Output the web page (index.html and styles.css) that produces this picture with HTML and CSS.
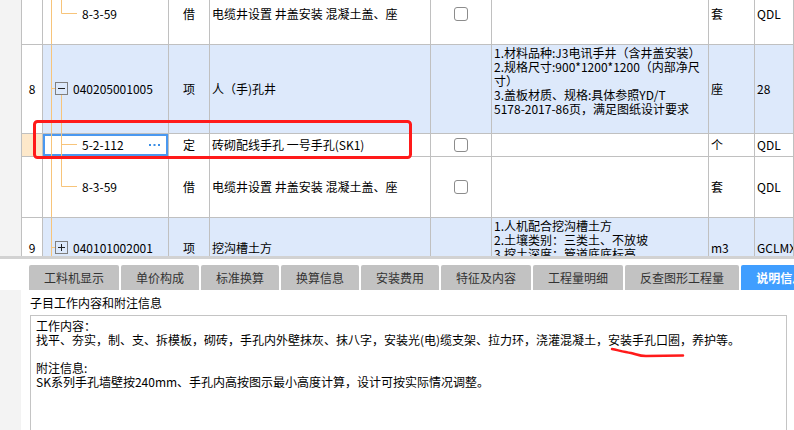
FILE: index.html
```html
<!DOCTYPE html>
<html lang="zh-CN">
<head>
  <meta charset="UTF-8" />
  <title>清单定额</title>
  <link rel="stylesheet" href="styles.css">
</head>
<body>
  <div class="top">
    <div class="gutter"></div>
    <div class="grid">
      <div class="rows">
        <div class="row h61">
          <div class="cell num"></div>
          <div class="cell code">
            <svg class="tree" width="39" height="60"><path d="M8.5 0V60M18.5 0V29.5H34"/></svg>
            <span>8-3-59</span>
          </div>
          <div class="cell type">借</div>
          <div class="cell name">电缆井设置 井盖安装 混凝土盖、座</div>
          <div class="cell check"><span class="box"></span></div>
          <div class="cell desc"></div>
          <div class="cell unit">套</div>
          <div class="cell src">QDL</div>
        </div>

        <div class="row h89 blue">
          <div class="cell num">8</div>
          <div class="cell code">
            <svg class="tree" width="30" height="88">
              <path d="M8.5 0V88M8.5 43.5H12.5M18.5 49.5V88"/>
              <rect class="toggle" x="12.5" y="37.5" width="12" height="12"/>
              <path class="sign" d="M15 43.5H22"/>
            </svg>
            <span>040205001005</span>
          </div>
          <div class="cell type">项</div>
          <div class="cell name">人（手)孔井</div>
          <div class="cell check"></div>
          <div class="cell desc">1.材料品种:J3电讯手井（含井盖安装）<br>2.规格尺寸:900*1200*1200（内部净尺<br>寸）<br>3.盖板材质、规格:具体参照YD/T<br>5178-2017-86页，满足图纸设计要求</div>
          <div class="cell unit">座</div>
          <div class="cell src">28</div>
        </div>

        <div class="row h23">
          <div class="cell num current"></div>
          <div class="cell code selected">
            <svg class="tree" width="39" height="22"><path d="M8.5 0V22M18.5 0V22M18.5 10.5H34"/></svg>
            <span>5-2-112</span>
            <svg class="more" width="12" height="3"><rect x="0" y="0" width="2" height="2"/><rect x="4.5" y="0" width="2" height="2"/><rect x="9" y="0" width="2" height="2"/></svg>
          </div>
          <div class="cell type">定</div>
          <div class="cell name">砖砌配线手孔 一号手孔(SK1)</div>
          <div class="cell check"><span class="box"></span></div>
          <div class="cell desc"></div>
          <div class="cell unit">个</div>
          <div class="cell src">QDL</div>
        </div>

        <div class="row h61">
          <div class="cell num"></div>
          <div class="cell code">
            <svg class="tree" width="39" height="60"><path d="M8.5 0V60M18.5 0V29.5H34"/></svg>
            <span>8-3-59</span>
          </div>
          <div class="cell type">借</div>
          <div class="cell name">电缆井设置 井盖安装 混凝土盖、座</div>
          <div class="cell check"><span class="box"></span></div>
          <div class="cell desc"></div>
          <div class="cell unit">套</div>
          <div class="cell src">QDL</div>
        </div>

        <div class="row h61 blue">
          <div class="cell num">9</div>
          <div class="cell code">
            <svg class="tree" width="30" height="60">
              <path d="M8.5 0V60M8.5 29.5H12.5"/>
              <rect class="toggle" x="12.5" y="23.5" width="12" height="12"/>
              <path class="sign" d="M15 29.5H22M18.5 26V33"/>
            </svg>
            <span>040101002001</span>
          </div>
          <div class="cell type">项</div>
          <div class="cell name">挖沟槽土方</div>
          <div class="cell check"></div>
          <div class="cell desc">1.人机配合挖沟槽土方<br>2.土壤类别：三类土、不放坡<br>3.挖土深度：管道底底标高</div>
          <div class="cell unit">m3</div>
          <div class="cell src">GCLMXHJ</div>
        </div>
      </div>
    </div>
  </div>

  <div class="splitter"></div>

  <div class="tabs">
    <div class="tab">工料机显示</div>
    <div class="tab">单价构成</div>
    <div class="tab">标准换算</div>
    <div class="tab">换算信息</div>
    <div class="tab">安装费用</div>
    <div class="tab">特征及内容</div>
    <div class="tab">工程量明细</div>
    <div class="tab">反查图形工程量</div>
    <div class="tab active">说明信息</div>
  </div>

  <div class="panel">
    <div class="gutter"></div>
    <div class="panel-body">
      <div class="panel-title">子目工作内容和附注信息</div>
      <div class="notes">工作内容：<br>找平、夯实，制、支、拆模板，砌砖，手孔内外壁抹灰、抹八字，安装光(电)缆支架、拉力环，浇灌混凝土，安装手孔口圈，养护等。<br><br>附注信息:<br>SK系列手孔墙壁按240mm、手孔内高按图示最小高度计算，设计可按实际情况调整。</div>
    </div>
  </div>

  <!-- hand-drawn markup on top of the screenshot -->
  <svg class="marks" width="794" height="430">
    <rect x="34.5" y="121.5" width="376" height="36" rx="3"/>
    <path d="M612 349C619 350.5 625 352 631 353C636 354 639 356 646 356L683 355.5"/>
  </svg>
</body>
</html>
```

FILE: styles.css
```css
body {
  margin: 0;
  width: 794px;
  height: 430px;
  overflow: hidden;
  position: relative;
  font-family: "Noto Sans CJK SC", "Liberation Sans", sans-serif;
  font-size: 12px;
  color: #000;
  background-color: #fff;
}

.top {
  display: flex;
  height: 256px;
}

.gutter {
  flex: none;
  width: 21px;
  background-color: #f3f3f3;
}

.grid {
  flex: 1;
  min-width: 0;
  border-left: 1px solid #c0c0c0;
  overflow: hidden;
}

.rows {
  margin-top: -16px;
}

.row {
  display: grid;
  grid-template-columns: 21px 126px 41px 221px 61px 217px 46px 1fr;
  box-sizing: border-box;
  border-bottom: 1px solid #c0c0c0;
  background-color: #fff;
}

.h61 { height: 61px; }
.h89 { height: 89px; }
.h23 { height: 23px; }

.row.blue .cell {
  background-color: #dde9fb;
}

.row.blue .cell.num {
  background-color: #fff;
}

.cell {
  display: flex;
  align-items: center;
  box-sizing: border-box;
  min-width: 0;
  overflow: hidden;
  white-space: nowrap;
  border-right: 1px solid #c0c0c0;
  line-height: 14px;
}

.cell.num {
  justify-content: center;
}

.cell.num.current {
  background-color: #fde8ca;
}

.cell.code.selected {
  box-shadow: inset 0 0 0 2px #4a98f0;
}

.tree {
  display: block;
  flex: none;
}

.tree path {
  fill: none;
  stroke: #f7c47a;
  stroke-width: 1;
}

.tree .toggle {
  fill: none;
  stroke: #808080;
  stroke-width: 1;
}

.tree .sign {
  stroke: #222;
}

.more {
  display: block;
  margin-left: auto;
  margin-right: 7px;
  fill: #3a8ee6;
}

.cell.type {
  justify-content: center;
}

.cell.name {
  padding-left: 2px;
}

.cell.check {
  justify-content: center;
}

.box {
  width: 12px;
  height: 12px;
  border: 1px solid #8c8c8c;
  border-radius: 3px;
  background-color: #fff;
}

.cell.desc {
  display: block;
  padding: 1px 0 0 2px;
}

.cell.unit,
.cell.src {
  padding-left: 2px;
}

.splitter {
  height: 3px;
  background-color: #d2d2d2;
}

.tabs {
  display: flex;
  gap: 2px;
  padding: 6px 0 0 29px;
}

.tab {
  flex: none;
  height: 25px;
  line-height: 25px;
  padding: 0 15px;
  background-color: #c2c2c2;
  color: #333;
  border-radius: 2px 2px 0 0;
}

.tab.active {
  background-color: #409eff;
  color: #fff;
  font-weight: bold;
}

.panel {
  display: flex;
  height: 140px;
}

.panel-body {
  flex: 1;
  padding: 6px 7px 0 9px;
}

.panel-title {
  line-height: 14px;
  margin-bottom: 5px;
}

.notes {
  height: 120px;
  border: 1px solid #c4c4c4;
  padding: 3px 5px;
  line-height: 14px;
  white-space: nowrap;
}

.marks {
  position: absolute;
  top: 0;
  left: 0;
  pointer-events: none;
  fill: none;
  stroke: #ff1a1a;
  stroke-width: 3;
  stroke-linecap: round;
}

.marks path {
  stroke-width: 2.5;
}
```
